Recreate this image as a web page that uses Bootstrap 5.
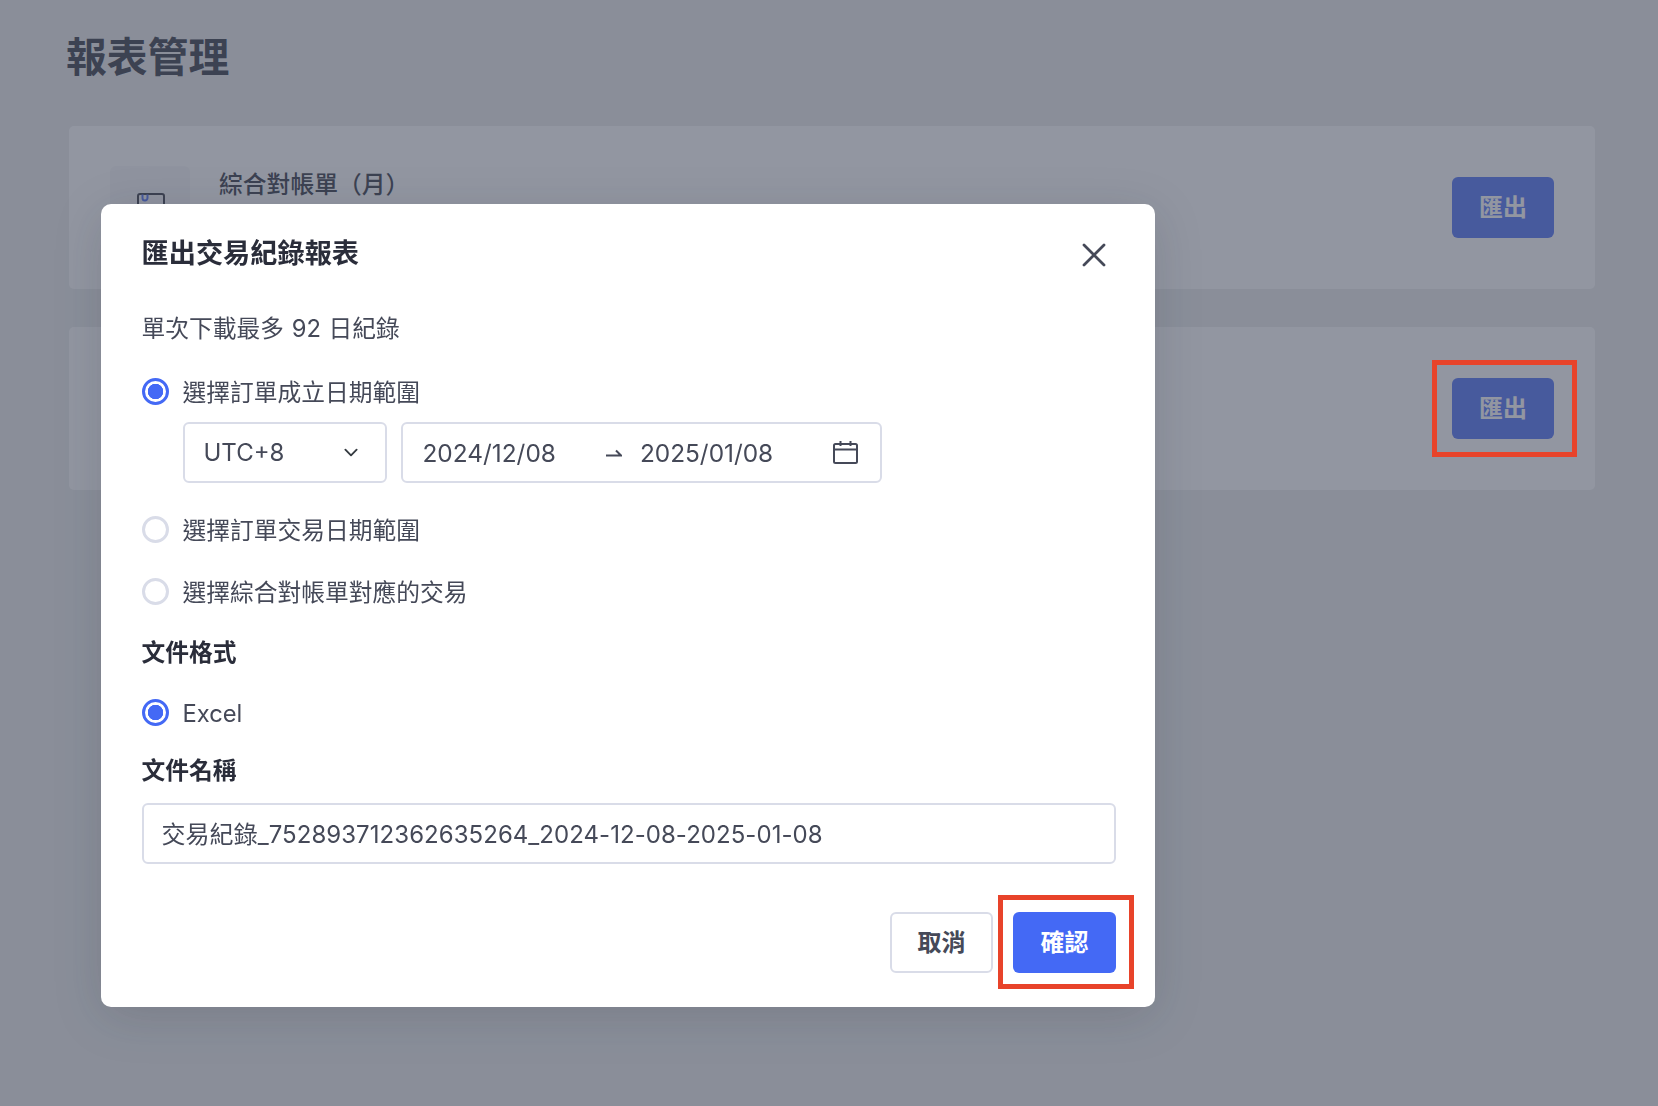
<!DOCTYPE html>
<html lang="zh-Hant">
<head>
<meta charset="utf-8">
<title>報表管理</title>
<link href="https://cdn.jsdelivr.net/npm/bootstrap@5.3.0/dist/css/bootstrap.min.css" rel="stylesheet">
<style>
:root{--ink:#454958;--ink-strong:#2a2d3a;--line:#d9dce8;--brand:#4469f5;--cjk:"Inter","Noto Sans CJK TC",sans-serif;}
html,body{height:100%;}
body{background:#ebecec;font-family:var(--cjk);font-size:24px;line-height:34px;color:var(--ink);overflow:hidden;}
.page-wrap{padding:28px 63px 0 69px;}
.page-title{font-size:40.8px;line-height:58px;font-weight:700;color:var(--ink-strong);margin:0 0 40px -3px;}
.report-row{height:163px;background:#fff;border-radius:5px;padding:40px 41px 0;margin-bottom:38px;}
.report-thumb{width:80px;height:80px;background:#f7f8fa;border-radius:6px;margin-right:29px;padding:26px 0 0 27px;}
.report-name{font-size:23.8px;font-weight:500;color:var(--ink-strong);line-height:34px;padding-top:2px;}
.report-btn{width:102px;height:61px;margin-top:11px;}
.btn-fill{background:var(--brand);border:0;color:#fff;font-size:24px;font-weight:700;border-radius:6px;padding:0;line-height:1;}
.btn-fill:hover{background:var(--brand);color:#fff;}
.btn-line{background:#fff;border:2px solid var(--line);color:var(--ink);font-size:24px;font-weight:700;border-radius:6px;padding:0;line-height:1;}
.mark-box{position:absolute;border:5px solid #e8432a;z-index:1060;pointer-events:none;}
.mark-page{left:-20px;right:-23px;top:-18px;bottom:-18px;}
.mark-modal{left:-15px;right:-18px;top:-17px;bottom:-16px;}
.modal-backdrop.show{background:rgb(73,80,98);opacity:.6;}
.dialog-shell{margin:204px 0 0 101px;width:1054px;max-width:none;}
.dialog-shell .modal-content{border:0;border-radius:10px;padding:31px 39px 34px 40.5px;box-shadow:0 10px 50px rgba(30,35,50,.16);font-size:23.75px;color:var(--ink);}
.dialog-title{font-size:27.2px;line-height:34px;font-weight:700;color:var(--ink-strong);margin:0;padding-top:2px;height:34px;}
.close-x{background:none;border:0;padding:0;width:24px;height:24px;margin:8px 10px 0 0;line-height:0;}
.note-line{margin-top:42px;padding-top:1px;height:34px;word-spacing:1px;}
.pick{display:flex;align-items:center;min-height:34px;margin:0;padding:0;}
.pick .form-check-input{width:27px;height:27px;margin:0 14px 0 0;float:none;border:3px solid var(--line);flex:none;background-image:none;}
.pick .form-check-input:checked{background-color:#fff;border-color:var(--brand);background-image:radial-gradient(circle,var(--brand) 0,var(--brand) 7.5px,transparent 8px);}
.pick .form-check-label{line-height:34px;height:34px;padding-top:2px;}
.field-head{font-size:23.75px;line-height:34px;height:34px;padding-top:1px;font-weight:700;color:var(--ink-strong);}
.g29{margin-top:29px;}.g28{margin-top:28px;}.g27{margin-top:27px;}.g26{margin-top:26px;}.g24{margin-top:24px;}
.range-row{margin:14px 0 0 41px;gap:14px;}
.tz-select{width:204px;height:61px;flex:none;border:2px solid var(--line);border-radius:6px;font-size:24px;line-height:34px;color:var(--ink);padding:1px 40px 1px 19px;background-position:right 24px center;background-size:20px 15px;font-family:var(--cjk);}
.range-box{width:481px;height:61px;border:2px solid var(--line);border-radius:6px;padding:0 22px 0 20px;font-size:24.4px;}
.range-date{width:auto;}
.range-arrow{margin:0 18px 0 50px;line-height:0;}
.name-input{height:61px;margin-top:16px;border:2px solid var(--line);border-radius:6px;font-size:24px;line-height:34px;letter-spacing:.05px;color:var(--ink);padding:0 18px 2px;font-family:var(--cjk);}
.dialog-actions{margin-top:48px;gap:20px;}
.act-cancel{width:103px;height:61px;}
.act-ok{width:103px;height:61px;}
</style>
</head>
<body>
<main class="page-wrap">
  <h1 class="page-title">報表管理</h1>
  <section class="report-row d-flex justify-content-between align-items-start">
    <div class="d-flex align-items-start">
      <div class="report-thumb">
        <svg width="28" height="34" viewBox="0 0 28 34" fill="none"><rect x="1" y="1" width="26" height="32" rx="2" stroke="#2a2d3a" stroke-width="2"/><path d="M5.5 1.5v3.5a2.5 2.5 0 0 0 5 0V1.5" stroke="#4469f5" stroke-width="2"/></svg>
      </div>
      <div class="report-name">綜合對帳單（月）</div>
    </div>
    <button type="button" class="btn btn-fill report-btn">匯出</button>
  </section>
  <section class="report-row d-flex justify-content-end align-items-start">
    <div class="position-relative report-btn">
      <button type="button" class="btn btn-fill w-100 h-100">匯出</button>
      <span class="mark-box mark-page"></span>
    </div>
  </section>
</main>

<div class="modal-backdrop show"></div>
<div class="modal d-block" tabindex="-1" role="dialog">
  <div class="modal-dialog dialog-shell">
    <div class="modal-content">
      <div class="d-flex justify-content-between align-items-start">
        <h2 class="dialog-title">匯出交易紀錄報表</h2>
        <button type="button" class="close-x" aria-label="關閉">
          <svg width="24" height="24" viewBox="0 0 24 24" fill="none"><path d="M2 2l20 20M22 2L2 22" stroke="#454958" stroke-width="2.8" stroke-linecap="round"/></svg>
        </button>
      </div>
      <div class="note-line">單次下載最多 92 日紀錄</div>

      <div class="form-check pick g29">
        <input class="form-check-input" type="radio" name="rangeType" id="r1" checked>
        <label class="form-check-label" for="r1">選擇訂單成立日期範圍</label>
      </div>
      <div class="d-flex range-row">
        <select class="form-select tz-select"><option>UTC+8</option></select>
        <div class="range-box d-flex align-items-center">
          <span class="range-date">2024/12/08</span>
          <span class="range-arrow"><svg width="16" height="8" viewBox="0 0 16 8" fill="none"><path d="M0 6.5h15L10 1.5" stroke="#454958" stroke-width="2"/></svg></span>
          <span class="range-date">2025/01/08</span>
          <span class="ms-auto d-flex">
            <svg width="25" height="23" viewBox="0 0 25 23" fill="none"><rect x="1" y="3" width="23" height="19" rx="1.5" stroke="#454958" stroke-width="2"/><path d="M1 8.5h23M7.5 0v5M17.5 0v5" stroke="#454958" stroke-width="2"/></svg>
          </span>
        </div>
      </div>
      <div class="form-check pick g29">
        <input class="form-check-input" type="radio" name="rangeType" id="r2">
        <label class="form-check-label" for="r2">選擇訂單交易日期範圍</label>
      </div>
      <div class="form-check pick g28">
        <input class="form-check-input" type="radio" name="rangeType" id="r3">
        <label class="form-check-label" for="r3">選擇綜合對帳單對應的交易</label>
      </div>

      <div class="field-head g27">文件格式</div>
      <div class="form-check pick g26">
        <input class="form-check-input" type="radio" name="fmt" id="f1" checked>
        <label class="form-check-label" for="f1">Excel</label>
      </div>

      <div class="field-head g24">文件名稱</div>
      <input class="form-control name-input" type="text" value="交易紀錄_752893712362635264_2024-12-08-2025-01-08">

      <div class="d-flex justify-content-end dialog-actions">
        <button type="button" class="btn btn-line act-cancel">取消</button>
        <div class="position-relative act-ok">
          <button type="button" class="btn btn-fill w-100 h-100">確認</button>
          <span class="mark-box mark-modal"></span>
        </div>
      </div>
    </div>
  </div>
</div>
<script src="https://cdn.jsdelivr.net/npm/bootstrap@5.3.0/dist/js/bootstrap.bundle.min.js"></script>
</body>
</html>
